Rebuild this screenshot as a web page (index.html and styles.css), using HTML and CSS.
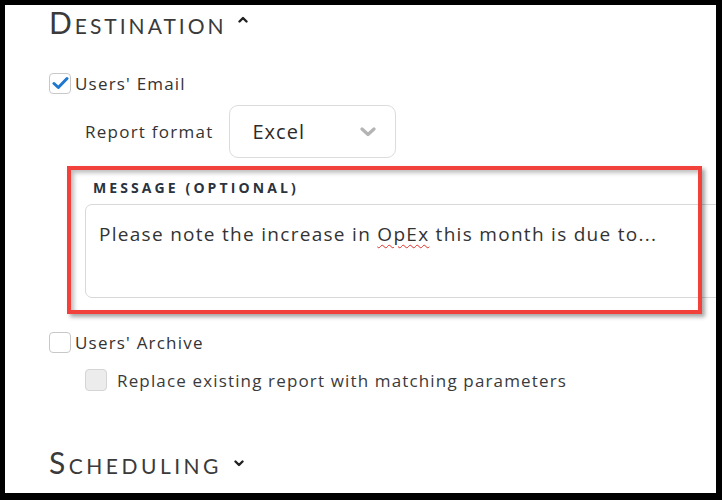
FILE: index.html
```html
<!DOCTYPE html>
<html>
<head>
<meta charset="utf-8">
<link rel="stylesheet" href="styles.css">
</head>
<body>
<div class="page">
  <h2 class="section-title">Destination
    <svg class="caret" width="10" height="7" viewBox="0 0 10 7"><path d="M1.5 5.5 L5 2 L8.5 5.5" fill="none" stroke="#222" stroke-width="2.4" stroke-linecap="round" stroke-linejoin="round"/></svg>
  </h2>

  <div class="check-row first">
    <span class="box checked">
      <svg width="17" height="14" viewBox="0 0 17 14"><path d="M2 7.5 L6.3 11.5 L15 2.5" fill="none" stroke="#1f77d0" stroke-width="3" stroke-linecap="round" stroke-linejoin="round"/></svg>
    </span>
    <span class="check-label">Users' Email</span>
  </div>

  <div class="format-row">
    <span class="format-label">Report format</span>
    <div class="select">
      <span class="select-value">Excel</span>
      <svg class="chev" width="16" height="10" viewBox="0 0 16 10"><path d="M2 2 L8 7.5 L14 2" fill="none" stroke="#b4b4b4" stroke-width="3.2" stroke-linecap="round" stroke-linejoin="round"/></svg>
    </div>
  </div>

  <div class="message">
    <div class="msg-label">MESSAGE (OPTIONAL)</div>
    <div class="textarea">Please note the increase in <span class="spell">OpEx</span> this month is due to...</div>
    <div class="annotation"></div>
  </div>

  <div class="check-row archive">
    <span class="box"></span>
    <span class="check-label">Users' Archive</span>
  </div>

  <div class="check-row replace">
    <span class="box disabled"></span>
    <span class="check-label replace-label">Replace existing report with matching parameters</span>
  </div>

  <h2 class="section-title scheduling">Scheduling
    <svg class="caret" width="10" height="7" viewBox="0 0 10 7"><path d="M1.5 1.5 L5 5 L8.5 1.5" fill="none" stroke="#222" stroke-width="2.4" stroke-linecap="round" stroke-linejoin="round"/></svg>
  </h2>
</div>
</body>
</html>
```

FILE: styles.css
```css
html, body {
  margin: 0;
  padding: 0;
  background: #000;
}
body {
  width: 722px;
  height: 500px;
  overflow: hidden;
}
.page {
  margin: 5px 6px 0 5px;
  width: 711px;
  height: 488px;
  background: #fff;
  overflow: hidden;
  box-sizing: border-box;
  padding: 2px 0 0 44px;
  font-family: "Open Sans", "Liberation Sans", sans-serif;
  color: #333;
}
.section-title {
  margin: 0;
  font-family: Lato, "Open Sans", sans-serif;
  font-weight: 400;
  font-variant: small-caps;
  font-size: 30px;
  line-height: 30px;
  color: #3a3a3a;
  letter-spacing: 3px;
  display: flex;
  align-items: center;
  gap: 11px;
}
.section-title .caret {
  margin-top: -6px;
}
.scheduling {
  margin-top: 56px;
  letter-spacing: 3.5px;
  gap: 12px;
}
.scheduling .caret {
  margin-top: 2px;
}
.check-row {
  display: flex;
  align-items: center;
  height: 22px;
}
.check-row.first {
  margin-top: 35px;
}
.check-row.archive {
  margin-top: 33px;
}
.check-row.replace {
  margin-top: 16px;
  padding-left: 36px;
}
.box {
  width: 22px;
  height: 21px;
  box-sizing: border-box;
  border: 1.5px solid #c8c8c8;
  border-radius: 4px;
  background: #fff;
  display: flex;
  align-items: center;
  justify-content: center;
  flex: none;
}
.box.disabled {
  background: #ececec;
  border-color: #d4d4d4;
  width: 22px;
  height: 22px;
}
.check-label {
  margin-left: 4px;
  font-size: 17px;
  letter-spacing: 1.2px;
  color: #333;
}
.replace-label {
  margin-left: 10px;
  font-size: 17px;
  letter-spacing: 1.15px;
  color: #3a3a3a;
}
.format-row {
  display: flex;
  align-items: center;
  margin-top: 11px;
  padding-left: 36px;
}
.format-label {
  font-size: 17px;
  letter-spacing: 1.25px;
  color: #333;
}
.select {
  margin-left: 16px;
  width: 167px;
  height: 53px;
  box-sizing: border-box;
  border: 1.5px solid #dcdcdc;
  border-radius: 9px;
  display: flex;
  align-items: center;
  justify-content: space-between;
  padding: 0 19px 0 22px;
}
.select-value {
  font-size: 20px;
  letter-spacing: 1px;
  color: #2b2b2b;
}
.message {
  position: relative;
  margin-top: 21px;
  padding-left: 36px;
}
.msg-label {
  padding-left: 8px;
  font-size: 14px;
  line-height: 18px;
  font-weight: 700;
  letter-spacing: 3.1px;
  color: #2a3340;
}
.textarea {
  margin-top: 7px;
  width: 700px;
  height: 94px;
  box-sizing: border-box;
  border: 1.5px solid #d8d8d8;
  border-radius: 7px;
  padding: 16px 0 0 13px;
  font-size: 19px;
  line-height: 26px;
  letter-spacing: 1.29px;
  color: #333;
  background: #fff;
}
.spell {
  text-decoration: underline wavy #e0302a;
  text-decoration-thickness: 1px;
  text-underline-offset: 3px;
}
.annotation {
  position: absolute;
  left: 18px;
  top: -13px;
  width: 635px;
  height: 148px;
  box-sizing: border-box;
  border: 4px solid #f2403a;
  box-shadow: 3px 3px 4px rgba(0,0,0,0.35), inset 3px 3px 4px rgba(0,0,0,0.25);
  pointer-events: none;
}
```
